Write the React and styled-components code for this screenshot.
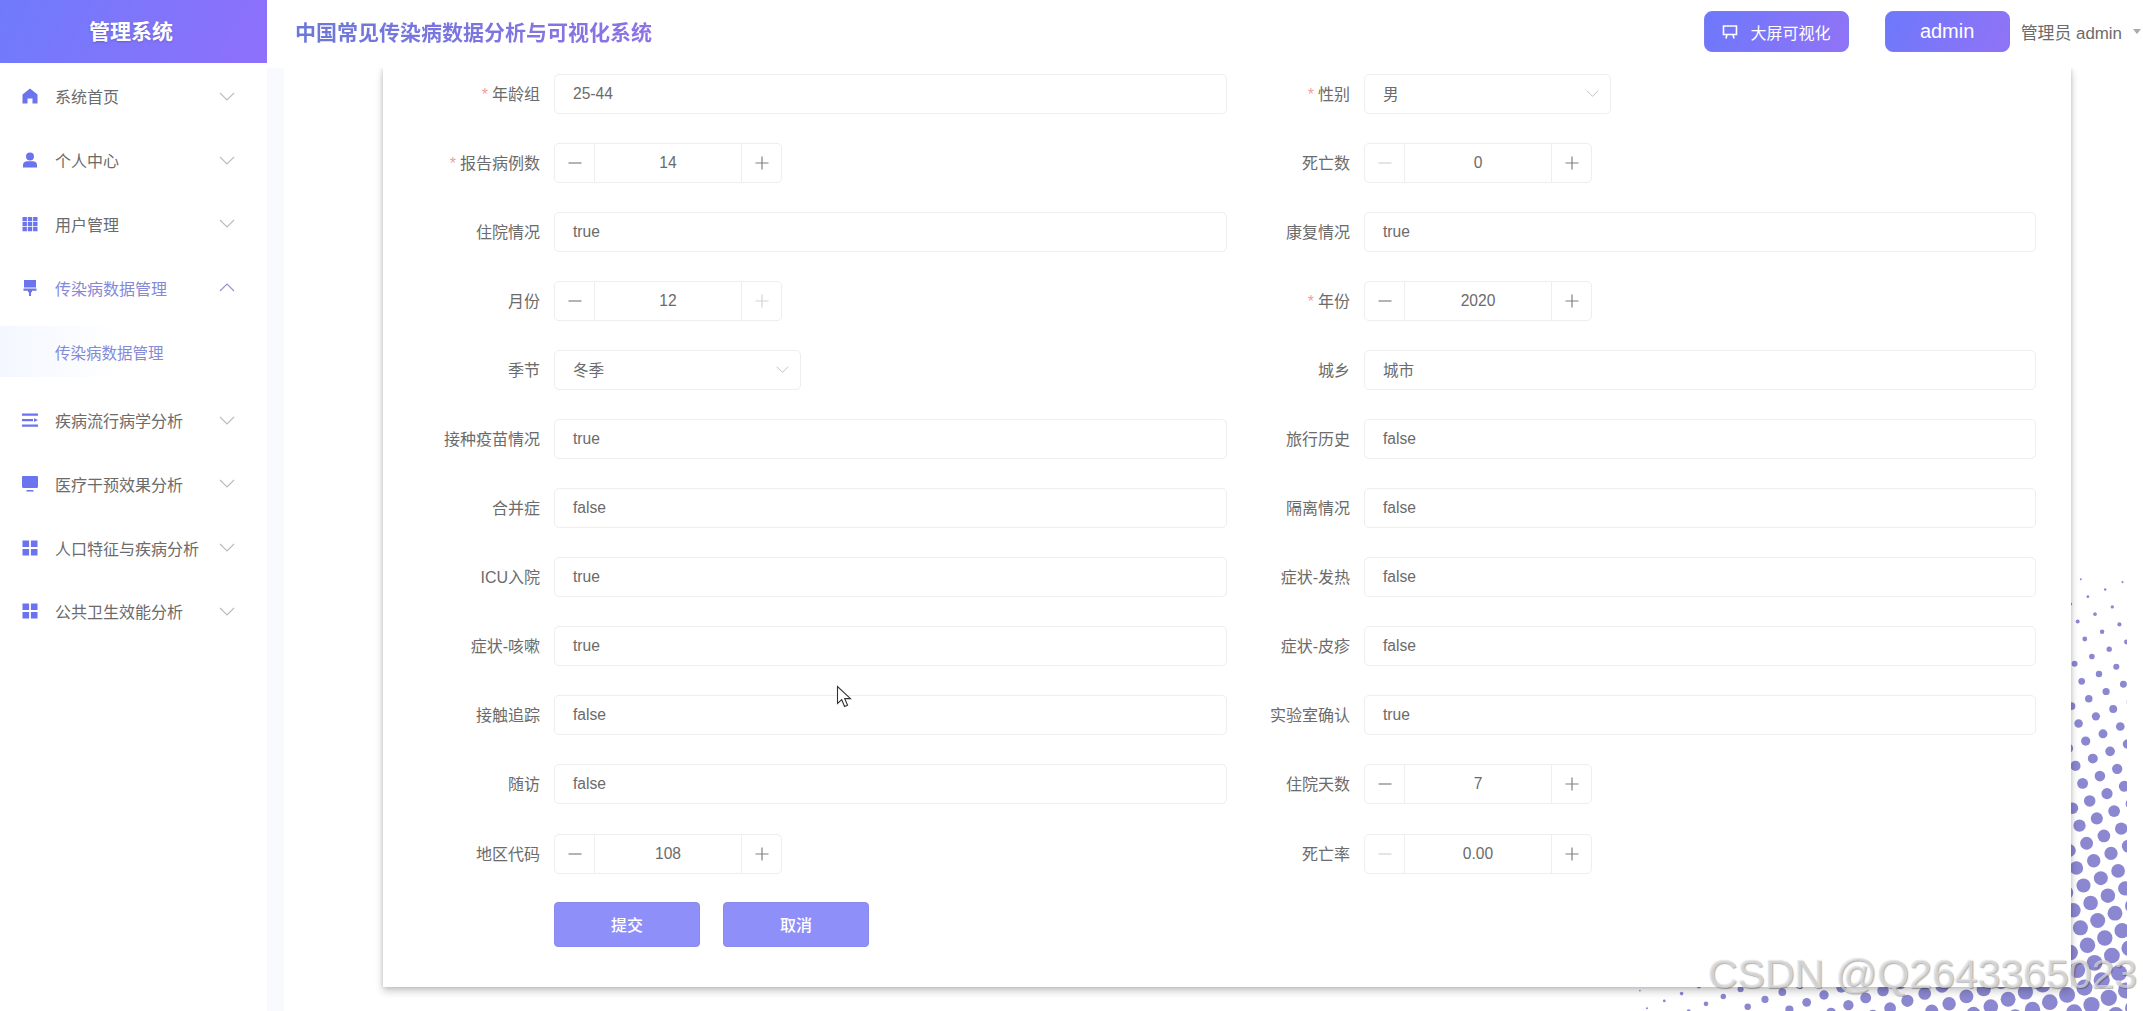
import React, { useMemo } from 'react';
import styled, { createGlobalStyle } from 'styled-components';

const Global = createGlobalStyle`
  html, body { margin: 0; padding: 0; background: #fff; overflow: hidden; }
  * { box-sizing: border-box; }
  body { font-family: "Liberation Sans", "Noto Sans CJK SC", sans-serif; color: #6b6b6b; }
`;

const Page = styled.div`
  position: relative;
  display: flex;
  width: 2143px;
  height: 1011px;
  overflow: hidden;
  background: #fff;
`;
const Sidebar = styled.aside`
  width: 267px;
  flex: none;
  display: flex;
  flex-direction: column;
  background: #fff;
`;
const Logo = styled.div`
  height: 63px;
  margin-bottom: 1.6px;
  display: flex;
  align-items: center;
  justify-content: center;
  padding: 0 5px 4px 0;
  background: linear-gradient(115deg, #6f7bfb 0%, #8f70fb 100%);
  color: #fff;
  font-size: 21px;
  font-weight: 700;
  text-shadow: 0 1px 2px rgba(60, 50, 120, 0.35);
`;
const MenuRow = styled.div`
  height: 63.7px;
  display: flex;
  align-items: center;
  padding: 0 32px 0 22px;
  color: ${p => (p.$active ? '#8488d6' : '#6b6b6b')};
  font-size: 16px;
`;
const MenuIcon = styled.svg`
  width: 16px;
  height: 16px;
  flex: none;
  margin-right: 17px;
  fill: #6c73ee;
`;
const MenuLabel = styled.span`
  flex: 1;
  white-space: nowrap;
`;
const Chevron = styled.svg`
  width: ${p => (p.$small ? 13 : 16)}px;
  height: 9px;
  flex: none;
  fill: none;
  stroke: ${p => (p.$active ? '#8f93c8' : '#bbb')};
  stroke-width: 1.1;
`;
const SubMenu = styled.div`
  padding: 7px 0 11px;
`;
const SubRow = styled.div`
  height: 51px;
  display: flex;
  align-items: center;
  padding-left: 55px;
  font-size: 15.5px;
  color: #8488d6;
  background: linear-gradient(90deg, #f4f7ff 0%, #fff 45%);
`;
const Right = styled.div`
  flex: 1;
  min-width: 0;
  display: flex;
  flex-direction: column;
`;
const Header = styled.header`
  height: 68px;
  flex: none;
  display: flex;
  align-items: flex-start;
  background: #fff;
  position: relative;
  z-index: 2;
`;
const Title = styled.h1`
  margin: 20px 0 0 28px;
  font-size: 21px;
  line-height: 25px;
  font-weight: 700;
  background: linear-gradient(90deg, #6b78d8, #8d72e6);
  -webkit-background-clip: text;
  background-clip: text;
  color: transparent;
  white-space: nowrap;
`;
const HeaderActions = styled.div`
  margin-left: auto;
  display: flex;
  align-items: center;
  margin-top: 11px;
`;
const HeadButton = styled.button`
  height: 41px;
  width: ${p => p.$w}px;
  margin-right: ${p => p.$mr}px;
  border: 1px solid #7d7cf0;
  border-radius: 8px;
  display: flex;
  align-items: center;
  justify-content: center;
  gap: 13px;
  padding: 0;
  background: linear-gradient(115deg, #6d78fb, #9173f6);
  color: #fff;
  font-family: inherit;
  font-size: ${p => p.$fs}px;
`;
const UserName = styled.span`
  font-size: 16.9px;
  color: #6b6b6b;
  white-space: nowrap;
  margin-right: 11px;
`;
const Caret = styled.i`
  width: 0;
  height: 0;
  border-left: 4px solid transparent;
  border-right: 4px solid transparent;
  border-top: 5px solid #aaa;
  margin-right: 2px;
`;
const Main = styled.main`
  position: relative;
  flex: 1;
  min-height: 0;
  display: flex;
  overflow: hidden;
`;
const Strip = styled.div`
  width: 17px;
  flex: none;
  background: #f8fafe;
`;
const Dots = styled.svg`
  position: absolute;
  left: 0;
  top: 0;
  width: 1876px;
  height: 943px;
`;
const Card = styled.section`
  position: relative;
  margin-left: 99px;
  width: 1688px;
  height: 919px;
  padding: 5.5px 35px 0 37px;
  background: #fff;
  box-shadow: 0 4px 8px rgba(0, 0, 0, 0.22), 0 0 4px rgba(0, 0, 0, 0.14);
`;
const FormGrid = styled.div`
  display: grid;
  grid-template-columns: 807px 806px;
  column-gap: 3px;
  row-gap: 29.1px;
`;
const Item = styled.div`
  display: flex;
  align-items: center;
  height: 40px;
`;
const Label = styled.label`
  width: 120px;
  flex: none;
  margin-right: 14px;
  margin-bottom: 2px;
  text-align: right;
  font-size: 16px;
  color: #6b6b6b;
  white-space: nowrap;
`;
const Star = styled.span`
  color: #f0a0a0;
  margin-right: 4px;
`;
const Field = styled.div`
  flex: 1;
  height: 40px;
  border: 1px solid #eeeeee;
  border-radius: 5px;
  padding: 0 18px;
  display: flex;
  align-items: center;
  font-size: 15.6px;
  color: #6b6b6b;
  background: #fff;
`;
const CjkValue = styled.span`
  margin-bottom: 2px;
`;
const SelectBox = styled(Field)`
  flex: none;
  width: 247px;
  justify-content: space-between;
  padding-right: 11px;
`;
const Stepper = styled.div`
  width: 228px;
  height: 40px;
  border: 1px solid #eeeeee;
  border-radius: 5px;
  display: grid;
  grid-template-columns: 40px 1fr 40px;
  background: #fff;
  font-size: 15.6px;
  color: #6b6b6b;
`;
const StepBtn = styled.div`
  display: flex;
  align-items: center;
  justify-content: center;
  border-${p => p.$side}: 1px solid #eeeeee;
  color: ${p => (p.$off ? '#d4d4d4' : '#808080')};
`;
const StepVal = styled.div`
  display: flex;
  align-items: center;
  justify-content: center;
`;
const StepIcon = styled.svg`
  width: 14px;
  height: 14px;
  fill: none;
  stroke: currentColor;
  stroke-width: 1.2;
`;
const Actions = styled.div`
  display: flex;
  gap: 23px;
  margin: 28.4px 0 0 134px;
`;
const SubmitBtn = styled.button`
  width: 146px;
  height: 45px;
  border: 1px solid #8a8aea;
  border-radius: 4px;
  background: #8f8ffa;
  color: #fff;
  font-family: inherit;
  font-size: 16px;
  font-weight: 500;
`;
const Watermark = styled.div`
  position: absolute;
  left: 1708px;
  top: 950px;
  font-size: 41px;
  line-height: 48px;
  color: rgba(255, 255, 255, 0.6);
  text-shadow: 1px 1px 1px rgba(0, 0, 0, 0.28), 0 0 1px rgba(0, 0, 0, 0.22);
  white-space: nowrap;
  z-index: 5;
`;
const CursorMark = styled.svg`
  position: absolute;
  left: 836px;
  top: 685px;
  width: 16px;
  height: 24px;
  z-index: 5;
`;

const icons = {
  home: <path d="M8 0.5 15.5 6.5V15.5H10.5V10.5H5.5V15.5H0.5V6.5Z" />,
  user: <path d="M8 0.5a4 4 0 1 1 0 8 4 4 0 0 1 0-8ZM1 13c0-2.4 2-3.7 4-3.7h6c2 0 4 1.3 4 3.7v2.6H1Z" />,
  grid: <path d="M0.5 1h4.4v4.2H0.5ZM5.8 1h4.4v4.2H5.8ZM11.1 1h4.4v4.2h-4.4ZM0.5 6h4.4v4.2H0.5ZM5.8 6h4.4v4.2H5.8ZM11.1 6h4.4v4.2h-4.4ZM0.5 11h4.4v4.2H0.5ZM5.8 11h4.4v4.2H5.8ZM11.1 11h4.4v4.2h-4.4Z" />,
  brush: <path d="M2 0h12v7.5H2ZM1.5 8.5h13v2.2H10V12l-1 .6V16H7v-3.4L6 12v-1.3H1.500Z" />,
  list: <path d="M0 1.500h16v2.200H0ZM0 7h11v2.200H0ZM12 6.300l4 1.800-4 1.800ZM0 12.500h16v2.200H0Z" />,
  screen: <path d="M1.200 0h13.600c.7 0 1.200.5 1.200 1.200v9.600c0 .7-.5 1.200-1.200 1.200H1.200C.5 12 0 11.500 0 10.800V1.200C0 .5.500 0 1.200 0ZM5 14h6l1 1.500H4Z" />,
  apps: <path d="M.5.500h6.600v6.600H.500ZM8.900.500h6.600v6.600H8.900ZM.5 8.900h6.600v6.600H8.900ZM8.900 8.900h6.600v6.600H8.900Z" />,
};
icons.apps = <path d="M.5.500h6.600v6.600H.500ZM8.900.500h6.600v6.600H8.900ZM.5 8.900h6.600v6.600H.500ZM8.900 8.900h6.600v6.600H8.900Z" />;

const ChevronIcon = ({ up }) => (
  <Chevron viewBox="0 0 16 9" $active={up}>
    <path d={up ? 'M1 8 8 1l7 7' : 'M1 1l7 7 7-7'} />
  </Chevron>
);

const MenuItem = ({ icon, label, active }) => (
  <MenuRow $active={active}>
    <MenuIcon viewBox="0 0 16 16">{icons[icon]}</MenuIcon>
    <MenuLabel>{label}</MenuLabel>
    <ChevronIcon up={active} />
  </MenuRow>
);

const NumberField = ({ value, minusOff, plusOff }) => (
  <Stepper>
    <StepBtn $side="right" $off={minusOff}>
      <StepIcon viewBox="0 0 14 14"><path d="M0.500 7h13" /></StepIcon>
    </StepBtn>
    <StepVal>{value}</StepVal>
    <StepBtn $side="left" $off={plusOff}>
      <StepIcon viewBox="0 0 14 14"><path d="M0.500 7h13M7 0.500v13" /></StepIcon>
    </StepBtn>
  </Stepper>
);

const SelectField = ({ value }) => (
  <SelectBox>
    <CjkValue>{value}</CjkValue>
    <Chevron viewBox="0 0 16 9" $small><path d="M1 1l7 7 7-7" /></Chevron>
  </SelectBox>
);

const rows = [
  ['年龄组', 'text', '25-44', { req: true }], ['性别', 'select', '男', { req: true }],
  ['报告病例数', 'num', '14', { req: true }], ['死亡数', 'num', '0', { minusOff: true }],
  ['住院情况', 'text', 'true'], ['康复情况', 'text', 'true'],
  ['月份', 'num', '12', { plusOff: true }], ['年份', 'num', '2020', { req: true }],
  ['季节', 'select', '冬季'], ['城乡', 'text', '城市', { cjk: true }],
  ['接种疫苗情况', 'text', 'true'], ['旅行历史', 'text', 'false'],
  ['合并症', 'text', 'false'], ['隔离情况', 'text', 'false'],
  ['ICU入院', 'text', 'true'], ['症状-发热', 'text', 'false'],
  ['症状-咳嗽', 'text', 'true'], ['症状-皮疹', 'text', 'false'],
  ['接触追踪', 'text', 'false'], ['实验室确认', 'text', 'true'],
  ['随访', 'text', 'false'], ['住院天数', 'num', '7'],
  ['地区代码', 'num', '108'], ['死亡率', 'num', '0.00', { minusOff: true }],
];

function useDots() {
  return useMemo(() => {
    const out = [];
    const bx = 2084.8, by = 639;
    for (let n = -40; n < 40; n++) {
      for (let m = -50; m < 30; m++) {
        const x = bx + 7.1 * n + 17.3 * m;
        const y = by + 17.5 * n - 7.3 * m;
        if (x > 2127 + 8 || y > 1020 || y < 560 || x < 1600) continue;
        const dx = (2110 - x) * 0.93;
        const dy = 1011 - y;
        const d = Math.sqrt(dx * dx + dy * dy);
        const r = 8.2 * (1 - Math.pow(d / 470, 1.5));
        if (r > 0.8) out.push({ x: x - 267, y: y - 68, r: Math.min(r, 8.2) });
      }
    }
    return out;
  }, []);
}

export default function App() {
  const dots = useDots();
  return (
    <Page>
      <Global />
      <Sidebar>
        <Logo>管理系统</Logo>
        <MenuItem icon="home" label="系统首页" />
        <MenuItem icon="user" label="个人中心" />
        <MenuItem icon="grid" label="用户管理" />
        <MenuItem icon="brush" label="传染病数据管理" active />
        <SubMenu><SubRow>传染病数据管理</SubRow></SubMenu>
        <MenuItem icon="list" label="疾病流行病学分析" />
        <MenuItem icon="screen" label="医疗干预效果分析" />
        <MenuItem icon="apps" label="人口特征与疾病分析" />
        <MenuItem icon="apps" label="公共卫生效能分析" />
      </Sidebar>
      <Right>
        <Header>
          <Title>中国常见传染病数据分析与可视化系统</Title>
          <HeaderActions>
            <HeadButton $w={145} $mr={36} $fs={16}>
              <svg width="16" height="16" viewBox="0 0 16 16" fill="none" stroke="#fff" strokeWidth="1.6">
                <path d="M1.500 2h13v8.500h-13ZM5 10.500 4 14.500M11 10.500l1 4" />
              </svg>
              大屏可视化
            </HeadButton>
            <HeadButton $w={125} $mr={11} $fs={20}>admin</HeadButton>
            <UserName>管理员 admin</UserName>
            <Caret />
          </HeaderActions>
        </Header>
        <Main>
          <Strip />
          <Dots viewBox="0 0 1876 943">
            <defs>
              <clipPath id="dotclip"><rect x="0" y="0" width="1860" height="943" /></clipPath>
            </defs>
            <g clipPath="url(#dotclip)" fill="#8b87d1">
              {dots.map((d, i) => <circle key={i} cx={d.x} cy={d.y} r={d.r} />)}
            </g>
          </Dots>
          <Card>
            <FormGrid>
              {rows.map(([label, kind, value, o = {}]) => (
                <Item key={label}>
                  <Label>{o.req && <Star>*</Star>}{label}</Label>
                  {kind === 'text' && <Field>{o.cjk ? <CjkValue>{value}</CjkValue> : value}</Field>}
                  {kind === 'select' && <SelectField value={value} />}
                  {kind === 'num' && <NumberField value={value} minusOff={o.minusOff} plusOff={o.plusOff} />}
                </Item>
              ))}
            </FormGrid>
            <Actions>
              <SubmitBtn>提交</SubmitBtn>
              <SubmitBtn>取消</SubmitBtn>
            </Actions>
          </Card>
        </Main>
      </Right>
      <Watermark>CSDN @Q2643365023</Watermark>
      <CursorMark viewBox="0 0 16 24">
        <path d="M1.500 1.500v17l4.200-3.800 2.900 6.800 3-1.300-2.900-6.600h5.800Z" fill="#fff" stroke="#333" strokeWidth="1.100" />
      </CursorMark>
    </Page>
  );
}
